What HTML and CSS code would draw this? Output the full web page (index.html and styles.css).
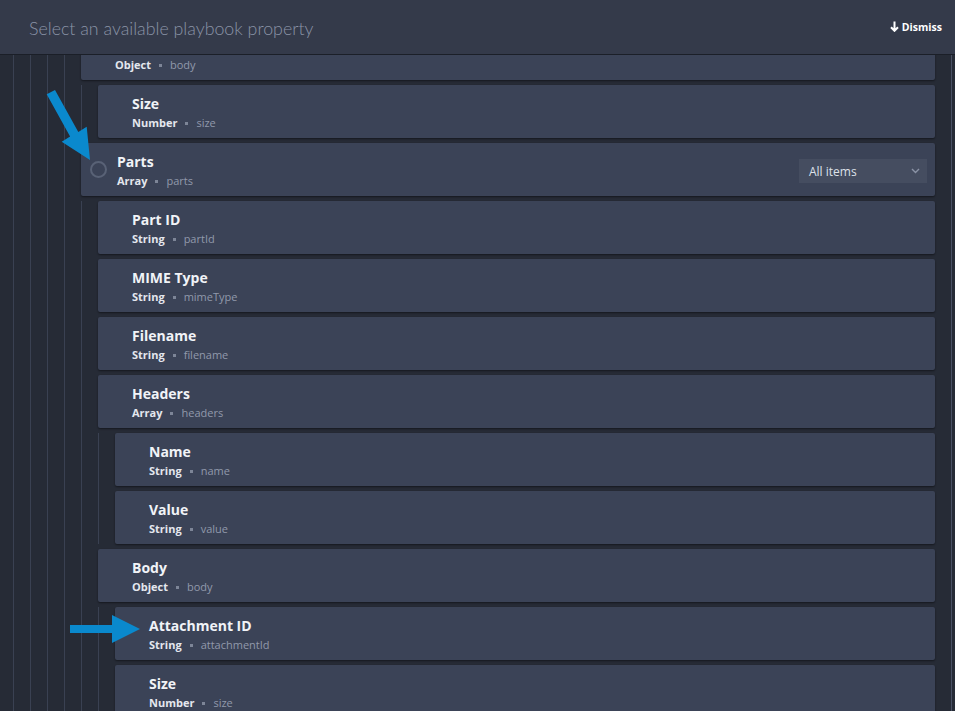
FILE: index.html
```html
<!DOCTYPE html>
<html>
<head>
<meta charset="utf-8">
<link rel="stylesheet" href="styles.css">
</head>
<body>
<div class="header">
  <div class="title">Select an available playbook property</div>
  <div class="dismiss">
    <svg width="9" height="11" viewBox="0 0 9 11"><path d="M4.5 0.5 V9.5 M1 6.2 L4.5 9.8 L8 6.2" fill="none" stroke="#fff" stroke-width="2"/></svg>
    <span>Dismiss</span>
  </div>
</div>
<div class="main">
  <div class="tree">
    <div class="kids">
      <div class="kids">
        <div class="kids">
          <div class="kids lastlevel">
            <div class="node">
              <div class="card"><div class="name">Body</div><div class="meta"><b>Object</b><i></i><span>body</span></div></div>
              <div class="kids">
                <div class="node"><div class="card"><div class="name">Size</div><div class="meta"><b>Number</b><i></i><span>size</span></div></div></div>
              </div>
            </div>
            <div class="node">
              <div class="card sel">
                <div class="radio"></div>
                <div class="txt"><div class="name">Parts</div><div class="meta"><b>Array</b><i></i><span>parts</span></div></div>
                <div class="select"><span>All items</span><svg width="9" height="6" viewBox="0 0 9 6"><path d="M1 1 L4.5 4.5 L8 1" fill="none" stroke="#8b93a6" stroke-width="1.4"/></svg></div>
              </div>
              <div class="kids">
                <div class="node"><div class="card"><div class="name">Part ID</div><div class="meta"><b>String</b><i></i><span>partId</span></div></div></div>
                <div class="node"><div class="card"><div class="name">MIME Type</div><div class="meta"><b>String</b><i></i><span>mimeType</span></div></div></div>
                <div class="node"><div class="card"><div class="name">Filename</div><div class="meta"><b>String</b><i></i><span>filename</span></div></div></div>
                <div class="node">
                  <div class="card"><div class="name">Headers</div><div class="meta"><b>Array</b><i></i><span>headers</span></div></div>
                  <div class="kids">
                    <div class="node"><div class="card"><div class="name">Name</div><div class="meta"><b>String</b><i></i><span>name</span></div></div></div>
                    <div class="node"><div class="card"><div class="name">Value</div><div class="meta"><b>String</b><i></i><span>value</span></div></div></div>
                  </div>
                </div>
                <div class="node">
                  <div class="card"><div class="name">Body</div><div class="meta"><b>Object</b><i></i><span>body</span></div></div>
                  <div class="kids">
                    <div class="node"><div class="card"><div class="name">Attachment ID</div><div class="meta"><b>String</b><i></i><span>attachmentId</span></div></div></div>
                    <div class="node"><div class="card"><div class="name">Size</div><div class="meta"><b>Number</b><i></i><span>size</span></div></div></div>
                  </div>
                </div>
              </div>
            </div>
          </div>
        </div>
      </div>
    </div>
  </div>
</div>
<svg class="arrows" width="955" height="711" viewBox="0 0 955 711">
  <polygon fill="#0a89cd" points="55,90 78.3,131.9 86.7,126.7 90,160 61.7,141.7 70.1,136.5 46.7,94.3"/>
  <polygon fill="#0a89cd" points="70,625 112,625 112,615 140,629 112,643 112,633 70,633"/>
</svg>
</body>
</html>
```

FILE: styles.css
```css
* { box-sizing: border-box; }
html, body { margin: 0; padding: 0; }
body {
  width: 955px;
  height: 711px;
  overflow: hidden;
  background: #262b36;
  font-family: "Open Sans", "Liberation Sans", sans-serif;
  display: flex;
  flex-direction: column;
}
.header {
  height: 55px;
  flex: none;
  background: #343a4a;
  border-bottom: 1px solid #1b1f28;
  display: flex;
  align-items: center;
  justify-content: space-between;
  padding: 0 13px 0 29px;
  position: relative;
  z-index: 2;
}
.title {
  font-family: "Lato", "Open Sans", sans-serif;
  font-size: 17.8px;
  font-weight: 300;
  color: #8a93a6;
  margin-top: 1px;
}
.dismiss {
  display: flex;
  align-items: center;
  gap: 3px;
  color: #ffffff;
  font-size: 10.5px;
  font-weight: 700;
  margin-bottom: 1px;
}
.main {
  flex: 1;
  overflow: hidden;
}
.tree {
  width: 952px;
  border-right: 1px solid #4a5164;
  padding-right: 16px;
  padding-left: 13px;
  margin-top: -28px;
  min-height: 800px;
}
.kids {
  border-left: 1px solid #3a4152;
  padding-left: 16px;
  display: flex;
  flex-direction: column;
  gap: 5px;
}
.node > .kids { margin-top: 5px; }
.node { display: flex; flex-direction: column; }
.card {
  height: 53px;
  background: #3b4357;
  border-radius: 2px;
  box-shadow: 0 1px 2px rgba(0,0,0,0.45);
  padding: 10px 12px 0 34px;
}
.name {
  font-size: 14px;
  line-height: 18px;
  font-weight: 700;
  color: #f1f3f7;
}
.meta {
  margin-top: 3px;
  font-size: 11px;
  line-height: 14px;
  display: flex;
  align-items: center;
  color: #9199ab;
}
.meta b { color: #e4e7ee; font-weight: 700; }
.meta i {
  width: 3px; height: 3px;
  background: #7d8597;
  margin: 0 8px;
  display: inline-block;
}
.card.sel {
  display: flex;
  align-items: flex-start;
  padding: 0 8px 0 9px;
}
.radio {
  width: 17px; height: 17px;
  border: 2px solid #596276;
  border-radius: 50%;
  margin-right: 10px;
  margin-top: 18px;
  flex: none;
}
.txt { flex: 1; padding-top: 10px; }
.select {
  width: 128px;
  height: 24px;
  background: #454d60;
  display: flex;
  align-items: center;
  justify-content: space-between;
  padding: 0 7px 0 10px;
  font-size: 12px;
  color: #dde1e9;
  margin-top: 16px;
}
.arrows {
  position: absolute;
  left: 0; top: 0;
  z-index: 3;
  pointer-events: none;
}
```
